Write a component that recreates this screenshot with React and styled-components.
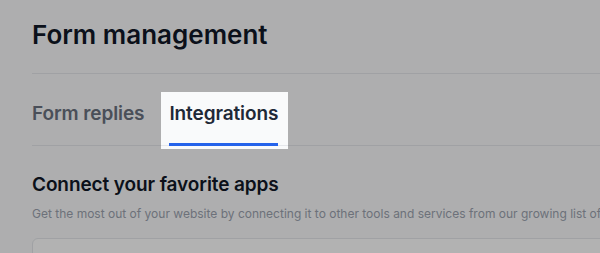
import styled, { createGlobalStyle } from "styled-components";

const Global = createGlobalStyle`
  html, body {
    margin: 0;
    padding: 0;
    overflow: hidden;
    background: #f9fafb;
  }
  body {
    font-family: Inter, "Noto Sans", sans-serif;
    -webkit-font-smoothing: antialiased;
  }
`;

const Page = styled.div`
  width: 900px;
  padding: 0 32px;
  box-sizing: border-box;
`;

const Header = styled.header`
  padding: 17px 0 20px;
  border-bottom: 1px solid #e5e7eb;
`;

const Title = styled.h1`
  margin: 0;
  font-size: 26px;
  line-height: 36px;
  font-weight: 600;
  color: #111827;
`;

const Tabs = styled.nav`
  display: flex;
  gap: 25px;
  padding-top: 25px;
  border-bottom: 1px solid #e5e7eb;
`;

const Tab = styled.div`
  position: relative;
  margin-bottom: -1px;
  padding-top: 1px;
  padding-bottom: 15px;
  font-size: 19px;
  line-height: 28px;
  font-weight: 600;
  letter-spacing: -0.1px;
  color: ${({ $active }) => ($active ? "#1f2937" : "#6b7280")};
  border-bottom: 3px solid ${({ $active }) => ($active ? "#2563eb" : "transparent")};

  ${({ $active }) =>
    $active &&
    `
    &::after {
      content: "";
      position: absolute;
      top: -7px;
      bottom: -6px;
      left: -8px;
      right: -10px;
      box-shadow: 0 0 0 9999px rgba(0, 0, 0, 0.3);
      pointer-events: none;
      z-index: 10;
    }
  `}
`;

const Section = styled.section`
  padding-top: 25px;
`;

const SectionTitle = styled.h2`
  margin: 0;
  font-size: 19px;
  line-height: 28px;
  font-weight: 600;
  letter-spacing: -0.1px;
  color: #111827;
`;

const Subtitle = styled.p`
  margin: 6px 0 0;
  font-size: 12px;
  line-height: 18px;
  color: #9ca3af;
  white-space: nowrap;
`;

const Card = styled.div`
  margin-top: 15px;
  height: 120px;
  background: #ffffff;
  border: 1px solid #e5e7eb;
  border-radius: 6px;
`;

export default function App() {
  return (
    <>
      <Global />
      <Page>
        <Header>
          <Title>Form management</Title>
        </Header>
        <Tabs>
          <Tab>Form replies</Tab>
          <Tab $active>Integrations</Tab>
        </Tabs>
        <Section>
          <SectionTitle>Connect your favorite apps</SectionTitle>
          <Subtitle>
            Get the most out of your website by connecting it to other tools and services from our growing list of integrations.
          </Subtitle>
          <Card />
        </Section>
      </Page>
    </>
  );
}
